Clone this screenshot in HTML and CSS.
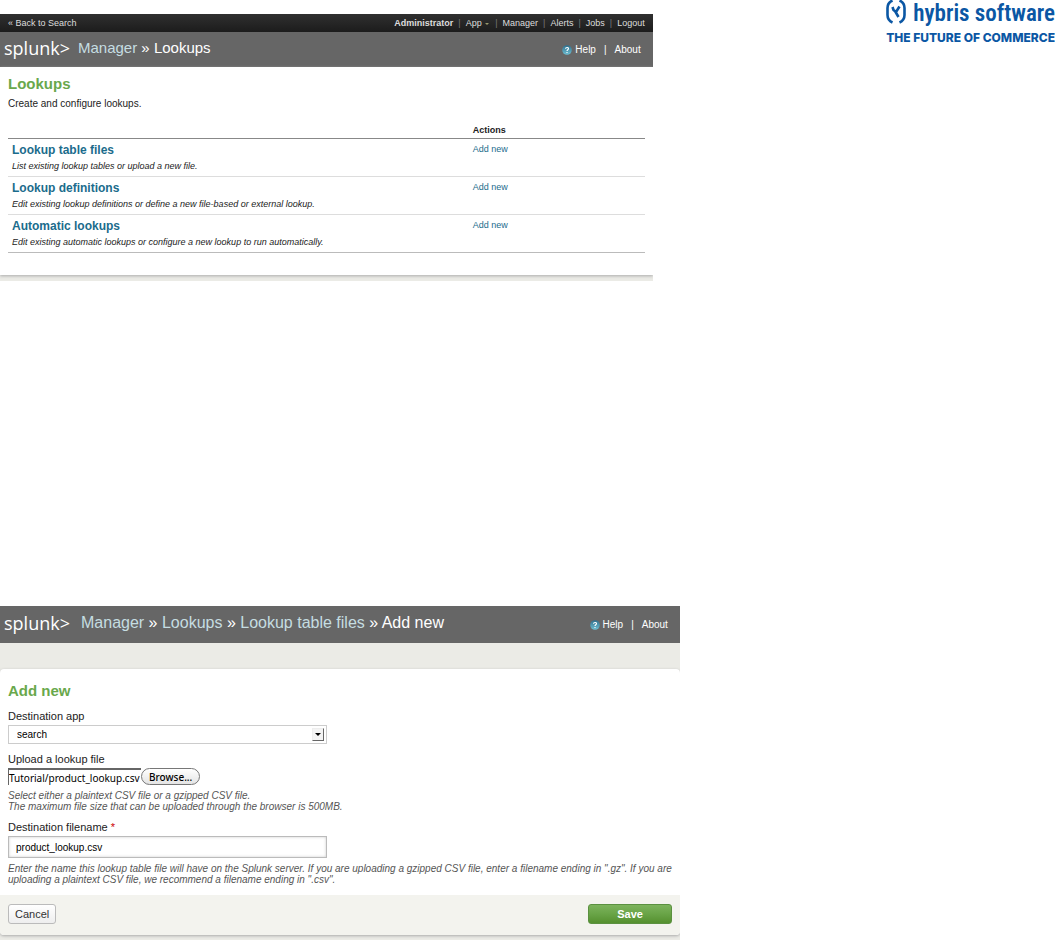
FILE: index.html
```html
<!DOCTYPE html>
<html lang="en">
<head>
  <meta charset="UTF-8" />
  <meta name="viewport" content="width=device-width, initial-scale=1.0"/>
  <title>Splunk Manager - Lookups</title>
  <link rel="stylesheet" href="styles.css">
</head>
<body>
  <div class="page">
    <main class="screens">

      <section class="screen screen-list">
        <nav class="topbar">
          <a href="#">« Back to Search</a>
          <ul class="topbar-links">
            <li><a href="#"><strong>Administrator</strong></a></li>
            <li><a href="#">App <span class="caret"></span></a></li>
            <li><a href="#">Manager</a></li>
            <li><a href="#">Alerts</a></li>
            <li><a href="#">Jobs</a></li>
            <li><a href="#">Logout</a></li>
          </ul>
        </nav>
        <header class="header">
          <a class="logo" href="#">splunk<span>&gt;</span></a>
          <div class="crumbs"><a href="#">Manager</a> » Lookups</div>
          <div class="help">
            <svg class="help-icon" viewBox="0 0 10 10">
              <defs>
                <linearGradient id="ball" x1="0" y1="0" x2="0" y2="1">
                  <stop offset="0" stop-color="#2f6f8c"/>
                  <stop offset="1" stop-color="#6fc0d4"/>
                </linearGradient>
              </defs>
              <circle cx="5" cy="5" r="4.8" fill="url(#ball)"/>
              <path d="M3.5 3.8C3.6 2 6.6 2 6.5 3.8C6.4 4.8 5 4.8 5 6M5 7v1" fill="none" stroke="#fff" stroke-width="1.1"/>
            </svg>
            <a href="#">Help</a>
            <span class="bar">|</span>
            <a href="#">About</a>
          </div>
        </header>
        <div class="card list-card">
          <h1>Lookups</h1>
          <p class="intro">Create and configure lookups.</p>
          <table class="lookups">
            <thead>
              <tr><th class="name"></th><th>Actions</th></tr>
            </thead>
            <tbody>
              <tr>
                <td><a class="title" href="#">Lookup table files</a><p>List existing lookup tables or upload a new file.</p></td>
                <td><a href="#">Add new</a></td>
              </tr>
              <tr>
                <td><a class="title" href="#">Lookup definitions</a><p>Edit existing lookup definitions or define a new file-based or external lookup.</p></td>
                <td><a href="#">Add new</a></td>
              </tr>
              <tr>
                <td><a class="title" href="#">Automatic lookups</a><p>Edit existing automatic lookups or configure a new lookup to run automatically.</p></td>
                <td><a href="#">Add new</a></td>
              </tr>
            </tbody>
          </table>
        </div>
      </section>

      <section class="screen screen-form">
        <header class="header">
          <a class="logo" href="#">splunk<span>&gt;</span></a>
          <div class="crumbs"><a href="#">Manager</a> » <a href="#">Lookups</a> » <a href="#">Lookup table files</a> » Add new</div>
          <div class="help">
            <svg class="help-icon" viewBox="0 0 10 10">
              <circle cx="5" cy="5" r="4.8" fill="url(#ball)"/>
              <path d="M3.5 3.8C3.6 2 6.6 2 6.5 3.8C6.4 4.8 5 4.8 5 6M5 7v1" fill="none" stroke="#fff" stroke-width="1.1"/>
            </svg>
            <a href="#">Help</a>
            <span class="bar">|</span>
            <a href="#">About</a>
          </div>
        </header>
        <form class="card form-card">
          <div class="fields">
            <h1>Add new</h1>
            <label for="app">Destination app</label>
            <div class="select">
              <select id="app">
                <option>search</option>
              </select>
              <span class="select-arrow"></span>
            </div>

            <label for="file">Upload a lookup file</label>
            <div class="file">
              <input type="text" id="file" value="Tutorial/product_lookup.csv" readonly>
              <button type="button" class="browse">Browse...</button>
            </div>
            <p class="hint">Select either a plaintext CSV file or a gzipped CSV file.<br>The maximum file size that can be uploaded through the browser is 500MB.</p>

            <label for="filename">Destination filename <span class="required">*</span></label>
            <input type="text" id="filename" class="filename" value="product_lookup.csv">
            <p class="hint">Enter the name this lookup table file will have on the Splunk server. If you are uploading a gzipped CSV file, enter a filename ending in ".gz". If you are uploading a plaintext CSV file, we recommend a filename ending in ".csv".</p>
          </div>
          <div class="buttons">
            <button type="button" class="btn">Cancel</button>
            <button type="submit" class="btn save">Save</button>
          </div>
        </form>
      </section>
    </main>

    <aside class="brand">
      <div class="brand-name">
        <svg class="brand-mark" viewBox="0 0 20 24">
          <g fill="none" stroke="#0b57a4" stroke-width="2.6">
            <path d="M6.500 0.500C3 2 1.500 4 1.500 8V15C1.500 19 3 21 6.500 22.500"/>
            <path d="M13.500 0.500C17 2 18.500 4 18.500 8V15C18.500 19 17 21 13.500 22.500"/>
            <path d="M6.500 7L7.500 10L10 12M13.500 6.500L10 12M9 11L12.500 17"/>
          </g>
        </svg>
        <span>hybris software</span>
      </div>
      <div class="brand-tag">THE FUTURE OF COMMERCE</div>
    </aside>
  </div>
</body>
</html>
```
FILE: styles.css
```css
* {
  box-sizing: border-box;
}

body {
  margin: 0;
  background: #fff;
  color: #222;
  font-family: "Liberation Sans", Arial, sans-serif;
  font-size: 10px;
  line-height: 12px;
}

a {
  color: #1b6c8c;
  text-decoration: none;
}

p, h1, ul {
  margin: 0;
  padding: 0;
}

.page {
  display: grid;
  grid-template-columns: 29fr 16fr;
}

.screens {
  padding-top: 14px;
}

.screen {
  overflow: hidden;
  background: #ebebe6;
}

.screen-list {
  width: 96%;
  margin-bottom: 325px;
  padding-bottom: 6px;
}

.screen-form {
  padding-bottom: 5px;
}

/* dark bar and header */
.topbar {
  display: flex;
  justify-content: space-between;
  align-items: center;
  height: 18px;
  padding: 0 8px;
  background: linear-gradient(#303030, #1c1c1c);
  font-size: 9px;
}

.topbar a {
  color: #ddd;
}

.topbar-links {
  display: flex;
  list-style: none;
}

.topbar-links li + li::before {
  content: "|";
  margin: 0 5px;
  color: #777;
}

.caret {
  display: inline-block;
  margin: 0 1px 1px 1px;
  border: 2px solid transparent;
  border-top-color: #9a9a6c;
  border-bottom: 0;
}

.header {
  display: flex;
  align-items: center;
  height: 35px;
  padding: 0 12px 0 4px;
  background: #666;
  color: #fff;
}

.logo {
  width: 74px;
  padding-bottom: 3px;
  color: #fff;
  font-family: "Open Sans", sans-serif;
  font-size: 18px;
  font-weight: 500;
  line-height: 24px;
}

.logo span {
  font-weight: 400;
}

.crumbs {
  flex: 1;
  padding-bottom: 4px;
  font-size: 15px;
  line-height: 18px;
}

.crumbs a {
  color: #c5dde1;
}

.help {
  display: flex;
  align-items: center;
  font-size: 10px;
}

.help a {
  color: #fff;
}

.help-icon {
  width: 10px;
  height: 10px;
  margin-right: 3px;
}

.bar {
  margin: 0 8px;
}

/* content */
.card {
  background: #fff;
  box-shadow: 0 1px 3px #aaa;
}

.card h1 {
  color: #69a84c;
  font-size: 15px;
  line-height: 18px;
}

.list-card {
  padding: 8px 8px 22px;
}

.intro {
  margin: 5px 0 14px;
}

.lookups {
  width: 100%;
  border-collapse: collapse;
  border-bottom: 1px solid #bbb;
}

.lookups th {
  padding: 0 0 2px;
  border-bottom: 1px solid #888;
  font-size: 9px;
  text-align: left;
}

.lookups th.name {
  width: 73%;
}

.lookups td {
  padding: 4px 0;
  border-top: 1px solid #ddd;
  font-size: 9px;
  vertical-align: top;
}

.lookups tr:first-child td {
  border-top: 0;
}

.lookups td:first-child {
  padding-left: 4px;
}

.lookups .title {
  font-size: 12px;
  font-weight: bold;
  line-height: 14px;
}

.lookups p {
  padding-top: 3px;
  font-style: italic;
}

/* form */
.screen-form .header {
  height: 37px;
}

.screen-form .logo {
  width: 77px;
}

.screen-form .crumbs {
  font-size: 16px;
}

.form-card {
  margin-top: 26px;
  border-radius: 4px;
}

.fields {
  padding: 13px 8px 10px;
}

.fields label {
  display: block;
  margin: 9px 0 3px;
  font-size: 11px;
  line-height: 12px;
}

.fields h1 + label {
  margin-top: 10px;
}

.required {
  color: #c00;
}

.select {
  position: relative;
  width: 48%;
}

.select select {
  display: block;
  width: 100%;
  height: 19px;
  padding: 0 8px;
  border: 1px solid #ccc;
  border-radius: 0;
  background: #fff;
  color: #000;
  font: 10px "Liberation Sans", Arial, sans-serif;
  appearance: none;
}

.select-arrow {
  position: absolute;
  top: 3px;
  right: 3px;
  display: grid;
  place-items: center;
  width: 12px;
  height: 13px;
  border: 1px solid #eee;
  border-right-color: #666;
  border-bottom-color: #666;
  background: #f4f4f4;
  pointer-events: none;
}

.select-arrow::after {
  content: "";
  border: 3px solid transparent;
  border-top-color: #000;
  border-bottom: 0;
}

.file {
  display: flex;
  align-items: center;
}

.file input {
  width: 133px;
  height: 17px;
  padding: 0;
  border: 0;
  border-top: 2px solid #666;
  border-left: 1px solid #666;
  font: 10px "Noto Sans", sans-serif;
}

.browse {
  height: 17px;
  padding: 0 7px;
  border: 1px solid #777;
  border-radius: 9px;
  background: linear-gradient(#fff, #e4e4e4);
  font: 500 10px "Noto Sans", sans-serif;
}

.hint {
  margin-top: 5px;
  color: #555;
  font-size: 10px;
  font-style: italic;
  line-height: 11px;
}

.filename {
  display: block;
  width: 48%;
  height: 22px;
  padding: 0 7px;
  border: 1px solid #bbb;
  box-shadow: inset 0 0 3px #ccc;
  font: 10px "Liberation Sans", Arial, sans-serif;
}

.buttons {
  display: flex;
  justify-content: space-between;
  padding: 9px 8px 11px;
  border-radius: 0 0 4px 4px;
  background: #f3f3ee;
}

.btn {
  height: 20px;
  padding: 0 6px;
  border: 1px solid #bbb;
  border-radius: 3px;
  background: linear-gradient(#fff, #eee);
  color: #333;
  font: 11px "Liberation Sans", Arial, sans-serif;
}

.save {
  padding: 0 28px;
  border-color: #5b9140;
  background: linear-gradient(#7cb35c, #69a447 50%, #55902f);
  color: #fff;
  font-weight: bold;
}

/* hybris logo */
.brand {
  justify-self: end;
  color: #0b57a4;
  white-space: nowrap;
}

.brand-name {
  display: flex;
  align-items: flex-start;
  justify-content: space-between;
  font-family: "Roboto Condensed", Roboto, sans-serif;
  font-size: 23px;
  font-weight: 600;
  line-height: 28px;
}

.brand-mark {
  width: 20px;
  height: 24px;
}

.brand-tag {
  margin-top: 4px;
  font-family: Inter, sans-serif;
  font-size: 12px;
  font-weight: 800;
}
```
